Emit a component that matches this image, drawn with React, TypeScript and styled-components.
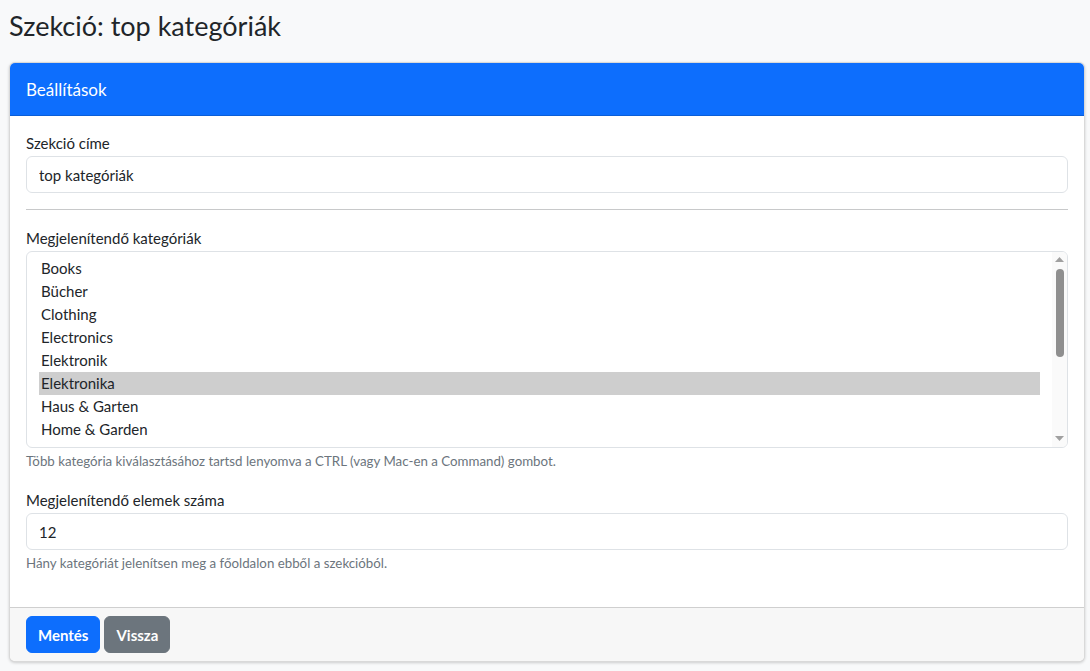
import React from "react";
import styled, { createGlobalStyle } from "styled-components";

const Global = createGlobalStyle`
  html, body { margin: 0; padding: 0; background: #f8f9fa; }
  body { font-family: Lato, "Liberation Sans", sans-serif; color: #212529; }
  * { box-sizing: border-box; }
`;

const Page = styled.div`
  padding: 10px 5px 8px 9px;
`;

const Title = styled.h1`
  margin: 0 0 21px;
  font-size: 27px;
  font-weight: 400;
  line-height: 31px;
  color: #212529;
`;

const Card = styled.div`
  background: #fff;
  border: 1px solid rgba(0, 0, 0, 0.15);
  border-radius: 6px;
  box-shadow: 0 1px 3px rgba(0, 0, 0, 0.18);
  overflow: hidden;
`;

const CardHeader = styled.div`
  background: #0d6efd;
  color: #fff;
  height: 53px;
  display: flex;
  align-items: center;
  padding: 0 16px;
  font-size: 17px;
  border-bottom: 1px solid #0b5ed7;
`;

const CardBody = styled.div`
  padding: 16px 16px 35px;
`;

const Field = styled.div<{ $mb?: number }>`
  margin-bottom: ${(p) => p.$mb ?? 0}px;
`;

const Label = styled.label`
  display: block;
  font-size: 15px;
  line-height: 22px;
  margin-bottom: 2px;
`;

const Input = styled.input`
  display: block;
  width: 100%;
  height: 37px;
  padding: 0 12px;
  font-family: inherit;
  font-size: 15px;
  color: #212529;
  border: 1px solid #dee2e6;
  border-radius: 6px;
  background: #fff;
  outline: none;
`;

const Divider = styled.hr`
  border: 0;
  border-top: 1px solid #c8c9ca;
  margin: 16px 0 17px;
`;

const ListFrame = styled.div`
  display: flex;
  height: 197px;
  border: 1px solid #dee2e6;
  border-radius: 6px;
  background: #fff;
  overflow: hidden;
`;

const Options = styled.div`
  flex: 1;
  padding: 5px 12px 0 12px;
  overflow: hidden;
`;

const Option = styled.div<{ $selected?: boolean }>`
  height: 23px;
  padding: 0 2px;
  font-size: 15px;
  line-height: 23px;
  color: #212529;
  background: ${(p) => (p.$selected ? "#cecece" : "transparent")};
  white-space: nowrap;
`;

const ScrollTrack = styled.div`
  width: 15px;
  background: #fafafa;
  display: flex;
  flex-direction: column;
  align-items: center;
  padding-top: 5px;
`;

const ScrollArrow = styled.svg<{ $bottom?: boolean }>`
  display: block;
  width: 9px;
  height: 5px;
  flex: none;
  margin-bottom: ${(p) => (p.$bottom ? 6 : 0)}px;
`;

const Thumb = styled.div`
  width: 8px;
  height: 88px;
  margin-top: 7px;
  border-radius: 4px;
  background: #8f8f8f;
`;

const TrackSpacer = styled.div`
  flex: 1;
`;

const Help = styled.div`
  margin-top: 4px;
  font-size: 13.3px;
  line-height: 18px;
  color: #6c757d;
`;

const CardFooter = styled.div`
  background: #f7f7f7;
  border-top: 1px solid #cfcfcf;
  padding: 8px 16px;
  display: flex;
  gap: 4px;
`;

const Button = styled.button<{ $variant: "primary" | "secondary" }>`
  height: 37px;
  padding: 0 11px;
  border: 1px solid ${(p) => (p.$variant === "primary" ? "#0d6efd" : "#6c757d")};
  background: ${(p) => (p.$variant === "primary" ? "#0d6efd" : "#6c757d")};
  color: #fff;
  border-radius: 6px;
  font-family: inherit;
  font-size: 15px;
  font-weight: 700;
  cursor: pointer;
`;

const categories = [
  "Books",
  "Bücher",
  "Clothing",
  "Electronics",
  "Elektronik",
  "Elektronika",
  "Haus & Garten",
  "Home & Garden",
  "Kiadványok",
];

export default function App() {
  return (
    <>
      <Global />
      <Page>
        <Title>Szekció: top kategóriák</Title>
        <Card>
          <CardHeader>Beállítások</CardHeader>
          <CardBody>
            <Field>
              <Label>Szekció címe</Label>
              <Input defaultValue="top kategóriák" />
            </Field>
            <Divider />
            <Field $mb={19}>
              <Label>Megjelenítendő kategóriák</Label>
              <ListFrame role="listbox" aria-multiselectable="true">
                <Options>
                  {categories.map((c) => (
                    <Option key={c} role="option" aria-selected={c === "Elektronika"} $selected={c === "Elektronika"}>
                      {c}
                    </Option>
                  ))}
                </Options>
                <ScrollTrack>
                  <ScrollArrow viewBox="0 0 9 5">
                    <path d="M4.5 0L9 5H0z" fill="#a0a0a0" />
                  </ScrollArrow>
                  <Thumb />
                  <TrackSpacer />
                  <ScrollArrow viewBox="0 0 9 5" $bottom>
                    <path d="M0 0H9L4.5 5z" fill="#a0a0a0" />
                  </ScrollArrow>
                </ScrollTrack>
              </ListFrame>
              <Help>
                Több kategória kiválasztásához tartsd lenyomva a CTRL (vagy Mac-en a Command) gombot.
              </Help>
            </Field>
            <Field>
              <Label>Megjelenítendő elemek száma</Label>
              <Input defaultValue="12" />
              <Help>Hány kategóriát jelenítsen meg a főoldalon ebből a szekcióból.</Help>
            </Field>
          </CardBody>
          <CardFooter>
            <Button $variant="primary">Mentés</Button>
            <Button $variant="secondary">Vissza</Button>
          </CardFooter>
        </Card>
      </Page>
    </>
  );
}
